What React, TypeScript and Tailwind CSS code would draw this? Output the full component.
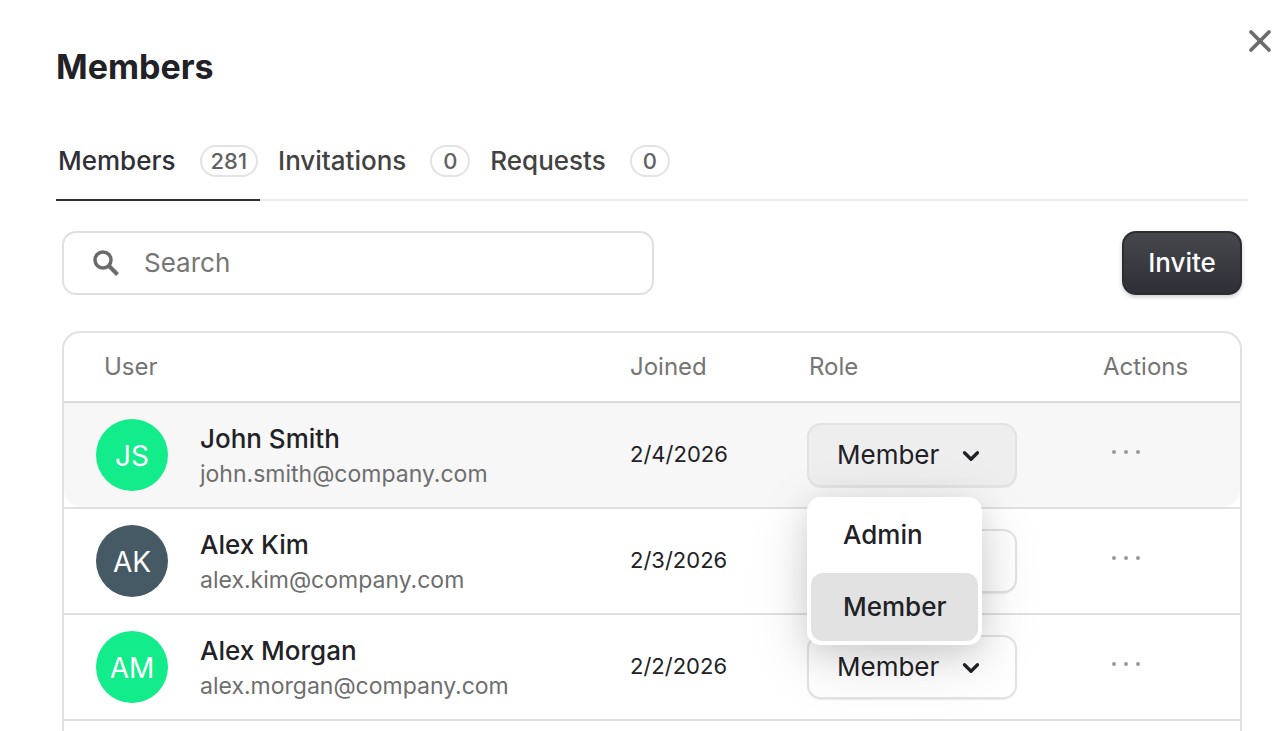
import React, { useState } from 'react';
import { ChevronDown, X } from 'lucide-react';
import clsx from 'clsx';

interface Member {
  initials: string;
  name: string;
  email: string;
  joined: string;
  role: string;
  color: string;
}

const members: Member[] = [
  { initials: 'JS', name: 'John Smith', email: 'john.smith@company.com', joined: '2/4/2026', role: 'Member', color: 'bg-[#12ec8b]' },
  { initials: 'AK', name: 'Alex Kim', email: 'alex.kim@company.com', joined: '2/3/2026', role: 'Member', color: 'bg-[#455a64]' },
  { initials: 'AM', name: 'Alex Morgan', email: 'alex.morgan@company.com', joined: '2/2/2026', role: 'Member', color: 'bg-[#12ec8b]' },
];

const tabs = [
  { label: 'Members', count: 281 },
  { label: 'Invitations', count: 0 },
  { label: 'Requests', count: 0 },
];

const roles = ['Admin', 'Member'];

interface RoleSelectProps {
  name: string;
  role: string;
  open: boolean;
  onToggle: () => void;
  onChange: (role: string) => void;
}

const RoleSelect: React.FC<RoleSelectProps> = ({ name, role, open, onToggle, onChange }) => {
  return (
    <div className="relative w-[210px]">
      <select
        aria-label={`Role of ${name}`}
        value={role}
        onChange={(e) => onChange(e.target.value)}
        onMouseDown={(e) => {
          // the list below replaces the native popup
          e.preventDefault();
          onToggle();
        }}
        className={clsx(
          'block h-16 w-full appearance-none rounded-[14px] border-2 border-[#e3e3e3] pb-0.5 pl-7 text-[26px] text-[#212126] shadow-[0_1px_1px_rgba(0,0,0,0.08)]',
          open ? 'bg-[#eeeeee]' : 'bg-white'
        )}
      >
        {roles.map((r) => (
          <option key={r}>{r}</option>
        ))}
      </select>
      <ChevronDown className="pointer-events-none absolute top-5 right-[33px] size-[26px] text-[#212126]" strokeWidth={3} />
      {open && (
        <div
          role="listbox"
          aria-label={`Roles for ${name}`}
          className="absolute top-[74px] left-0 z-10 flex w-[175px] flex-col gap-1 rounded-[14px] bg-white p-1 shadow-[0_16px_64px_rgba(0,0,0,0.12),0_8px_32px_rgba(0,0,0,0.12)]"
        >
          {roles.map((r) => (
            <button
              key={r}
              type="button"
              role="option"
              aria-selected={r === role}
              onClick={() => onChange(r)}
              className={clsx('h-[68px] rounded-xl px-8 pb-0.5 text-left text-[26px] font-medium text-[#212126]', r === role && 'bg-[#e2e2e2]')}
            >
              {r}
            </button>
          ))}
        </div>
      )}
    </div>
  );
};

const App: React.FC = () => {
  const [activeTab, setActiveTab] = useState('Members');
  const [search, setSearch] = useState('');
  const [openRow, setOpenRow] = useState<string | null>('John Smith');
  const [roleByName, setRoleByName] = useState<Record<string, string>>({});

  const shown = members.filter((m) => m.name.toLowerCase().includes(search.toLowerCase()));

  return (
    <main className="flex min-h-screen flex-col bg-white pr-10 pl-14 font-['Inter',sans-serif] text-[#212126]">
      <header className="flex items-start justify-between">
        <h1 className="mt-[45px] text-[34px] leading-[44px] font-bold">Members</h1>
        <button type="button" aria-label="Close" className="mt-[23px] -mr-[30px] text-[#6b6b6b]">
          <X className="size-9" strokeWidth={2.5} />
        </button>
      </header>

      <div role="tablist" className="mt-8 flex h-20 border-b-2 border-[#ebebeb]">
        {tabs.map((tab) => (
          <button
            key={tab.label}
            type="button"
            role="tab"
            aria-selected={tab.label === activeTab}
            onClick={() => setActiveTab(tab.label)}
            className={clsx(
              '-mb-0.5 mr-4 flex h-20 items-center gap-6 border-b-2 px-0.5 pt-0.5 text-[26px] font-medium',
              tab.label === activeTab ? 'border-[#2f3037] text-[#2f3037]' : 'border-transparent text-[#424242]'
            )}
          >
            <span className="pb-0.5">{tab.label}</span>
            <span className="flex h-8 min-w-10 items-center justify-center rounded-full border-2 border-[#e3e3e3] px-[9px] text-[22px] text-[#616161]">
              {tab.count}
            </span>
          </button>
        ))}
      </div>

      <div className="flex grow flex-col px-1.5">
        <div className="mt-[30px] flex items-center justify-between">
          <label className="flex h-16 w-[592px] items-center gap-5 rounded-[14px] border-2 border-[#e0e0e0] px-6">
            <svg className="size-9 text-[#6b6b6b]" viewBox="0 0 36 36" fill="none" stroke="currentColor">
              <circle cx="15" cy="15" r="8" strokeWidth="3.5" />
              <path d="M20.5 20.5L29.5 29.5" strokeWidth="4" />
            </svg>
            <input
              type="text"
              aria-label="Search"
              placeholder="Search"
              value={search}
              onChange={(e) => setSearch(e.target.value)}
              className="min-w-0 grow pb-0.5 text-[26px] outline-none placeholder:text-[#757575]"
            />
          </label>
          <button
            type="button"
            className="h-16 w-[120px] rounded-[14px] border-2 border-[#2c2c33] bg-linear-to-b from-[#47484d] to-[#2f2f37] pb-0.5 text-[26px] font-medium text-white shadow-[0_2px_4px_rgba(0,0,0,0.2)]"
          >
            Invite
          </button>
        </div>

        <div className="mt-9 grow rounded-t-[18px] border-2 border-b-0 border-[#e1e1e1]">
          <table className="w-full table-fixed border-separate border-spacing-0 text-left">
            <thead>
              <tr className="h-[70px] text-[24px] text-[#757575] *:border-b-2 *:border-[#dcdcdc] *:p-0 *:font-normal">
                <th scope="col"><span className="pl-10">User</span></th>
                <th scope="col" className="w-[177px]">Joined</th>
                <th scope="col" className="w-[294px]"><span className="pl-0.5">Role</span></th>
                <th scope="col" className="w-[139px]"><span className="pl-0.5">Actions</span></th>
              </tr>
            </thead>
            <tbody>
              {shown.map((m) => {
                const open = openRow === m.name;
                const cell = clsx('flex h-[104px] items-center', open && 'bg-[#f7f7f7]');
                return (
                  <tr key={m.name} className="*:border-b-2 *:border-[#e1e1e1] *:p-0">
                    <td>
                      <div className={clsx(cell, 'gap-8 rounded-bl-[18px] pl-8')}>
                        <span className={clsx('flex size-[72px] items-center justify-center rounded-full pt-0.5 text-[28px] text-white', m.color)}>
                          {m.initials}
                        </span>
                        <div className="pt-0.5">
                          <p className="text-[26px] leading-9 font-medium">{m.name}</p>
                          <p className="text-[23px] leading-[34px] text-[#6e6e6e]">{m.email}</p>
                        </div>
                      </div>
                    </td>
                    <td>
                      <div className={clsx(cell, 'pb-0.5 text-[22px]')}>{m.joined}</div>
                    </td>
                    <td>
                      <div className={cell}>
                        <RoleSelect
                          name={m.name}
                          role={roleByName[m.name] ?? m.role}
                          open={open}
                          onToggle={() => setOpenRow(open ? null : m.name)}
                          onChange={(role) => {
                            setRoleByName({ ...roleByName, [m.name]: role });
                            setOpenRow(null);
                          }}
                        />
                      </div>
                    </td>
                    <td>
                      <div className={clsx(cell, 'rounded-br-[18px] pb-1.5')}>
                        <button type="button" aria-label={`Actions for ${m.name}`} className="px-2.5 py-2 text-[#999999]">
                          <svg className="h-4 w-[30px]" viewBox="0 0 30 16" fill="currentColor">
                            <circle cx="3" cy="8" r="2" />
                            <circle cx="15" cy="8" r="2" />
                            <circle cx="27" cy="8" r="2" />
                          </svg>
                        </button>
                      </div>
                    </td>
                  </tr>
                );
              })}
            </tbody>
          </table>
        </div>
      </div>
    </main>
  );
};

export default App;
